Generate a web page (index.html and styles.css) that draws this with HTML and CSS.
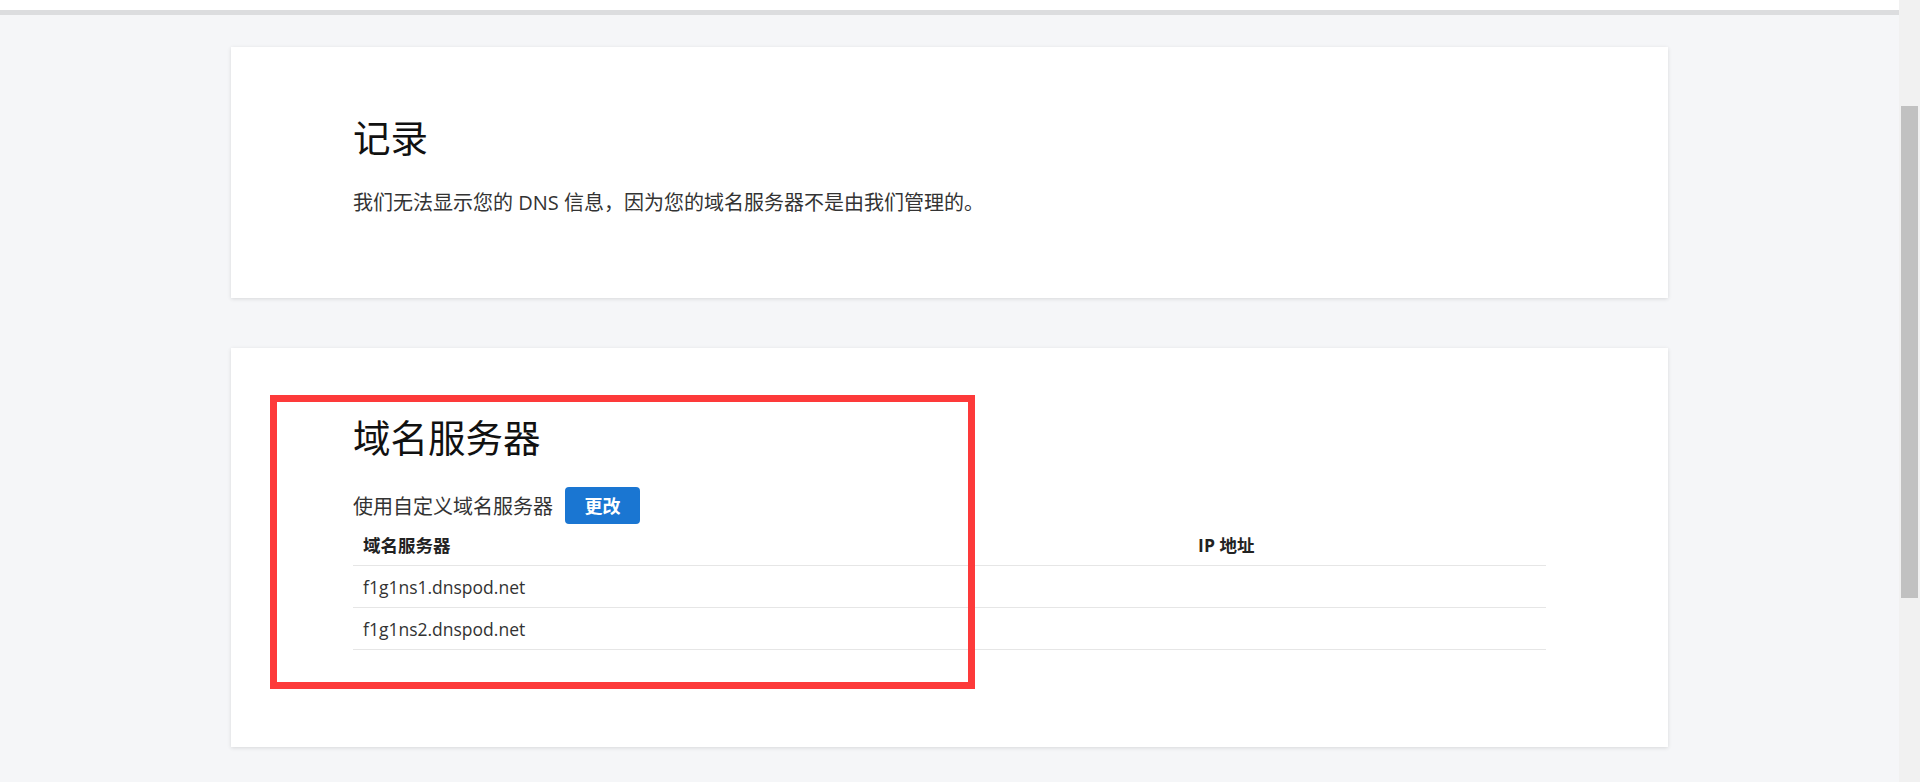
FILE: index.html
```html
<!DOCTYPE html>
<html lang="zh-CN">
<head>
<meta charset="utf-8">
<title>域名服务器</title>
<link rel="stylesheet" href="styles.css">
</head>
<body>
<div class="frame">
  <div class="viewport">
    <div class="topbar"></div>
    <main class="content">
      <section class="card card-records">
        <h2 class="card-title">记录</h2>
        <p class="card-text">我们无法显示您的 DNS 信息，因为您的域名服务器不是由我们管理的。</p>
      </section>
      <section class="card card-ns">
        <h2 class="card-title">域名服务器</h2>
        <div class="ns-line">
          <span class="ns-label">使用自定义域名服务器</span>
          <button class="btn-primary" type="button">更改</button>
        </div>
        <table class="ns-table">
          <thead>
            <tr><th class="col-name">域名服务器</th><th class="col-ip">IP 地址</th></tr>
          </thead>
          <tbody>
            <tr><td>f1g1ns1.dnspod.net</td><td></td></tr>
            <tr><td>f1g1ns2.dnspod.net</td><td></td></tr>
          </tbody>
        </table>
        <div class="highlight"></div>
      </section>
    </main>
  </div>
  <div class="scrollbar"><div class="scroll-thumb"></div></div>
</div>
</body>
</html>
```

FILE: styles.css
```css
html, body {
  margin: 0;
  padding: 0;
  height: 100%;
  overflow: hidden;
}
body {
  font-family: "Open Sans", "Noto Sans CJK SC", sans-serif;
  color: #333;
  background: #f5f6f8;
}
.frame {
  display: flex;
  height: 782px;
}
.viewport {
  flex: 1;
  display: flex;
  flex-direction: column;
  min-width: 0;
}
.topbar {
  height: 10px;
  background: #fff;
  border-bottom: 5px solid #dcdddf;
  flex: none;
}
.content {
  display: flex;
  flex-direction: column;
  align-items: center;
  padding-top: 32px;
  gap: 50px;
}
.card {
  width: 1437px;
  box-sizing: border-box;
  background: #fff;
  box-shadow: 0 1px 4px rgba(0, 0, 0, 0.12);
  padding: 0 122px;
}
.card-records {
  height: 251px;
  padding-top: 65px;
}
.card-ns {
  position: relative;
  height: 399px;
  padding-top: 64px;
}
.card-title {
  margin: 0;
  font-family: "Noto Sans CJK SC", sans-serif;
  font-weight: 400;
  font-size: 37.5px;
  line-height: 48px;
  color: #111;
}
.card-text {
  margin: 28px 0 0;
  font-size: 20px;
  line-height: 30px;
  color: #333;
}
.ns-line {
  display: flex;
  align-items: center;
  gap: 12px;
  margin-top: 27px;
  height: 37px;
}
.ns-label {
  font-size: 20px;
  color: #333;
}
.btn-primary {
  width: 75px;
  height: 37px;
  border: 0;
  border-radius: 4px;
  background: #1a76d2;
  color: #fff;
  font-family: "Noto Sans CJK SC", sans-serif;
  font-weight: 700;
  font-size: 18px;
  padding: 0;
  line-height: 37px;
}
.ns-table {
  width: 100%;
  border-collapse: collapse;
  font-size: 17.5px;
  color: #222;
}
.ns-table th {
  text-align: left;
  font-weight: 700;
  height: 41px;
  padding: 0 10px;
  border-bottom: 1px solid #e6e6e6;
  color: #222;
}
.ns-table td {
  height: 41px;
  padding: 0 10px;
  border-bottom: 1px solid #e6e6e6;
  color: #333;
}
.col-name {
  width: 70%;
}
.highlight {
  position: absolute;
  left: 39px;
  top: 47px;
  width: 705px;
  height: 294px;
  box-sizing: border-box;
  border: 7px solid #fd3a3a;
  pointer-events: none;
}
.scrollbar {
  flex: none;
  width: 21px;
  background: #f1f1f1;
  padding-top: 106px;
  box-sizing: border-box;
  display: flex;
  justify-content: center;
}
.scroll-thumb {
  width: 17px;
  height: 492px;
  background: #c1c1c1;
}
```
